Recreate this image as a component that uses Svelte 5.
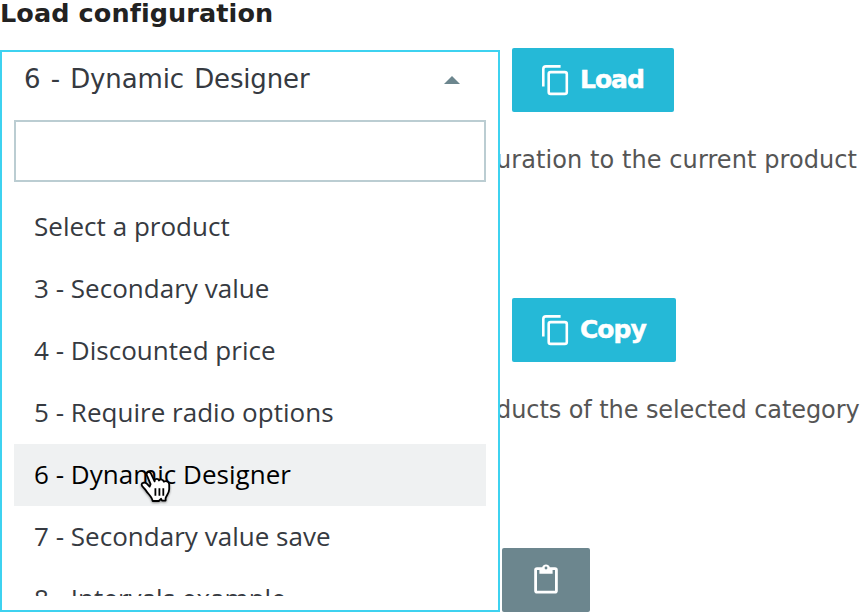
<script>
  const options = [
    'Select a product',
    '3 - Secondary value',
    '4 - Discounted price',
    '5 - Require radio options',
    '6 - Dynamic Designer',
    '7 - Secondary value save',
    '8 - Intervals example'
  ];
  let selected = $state(4);
  let query = $state('');
</script>

{#snippet copyIcon()}
  <svg class="copy-icon" width="28" height="32" viewBox="0 0 28 32" fill="none" stroke="#fff" stroke-width="2.6">
    <path d="M2.3 22.5V5.1Q2.3 2.4 5 2.4H19.6" />
    <rect x="7.7" y="8.1" width="18.1" height="21.8" rx="2" />
  </svg>
{/snippet}

<main class="page">
  <h3>Load configuration</h3>

  <section class="group">
    <button class="primary load">{@render copyIcon()}<span class="label">Load</span></button>
    <p class="help first">uration to the current product</p>
  </section>

  <section class="group">
    <button class="primary copy">{@render copyIcon()}<span class="label">Copy</span></button>
    <p class="help second">ducts of the selected category</p>
  </section>

  <button class="clipboard" aria-label="Clipboard">
    <svg width="24" height="30" viewBox="0 0 24 30">
      <path fill="#fff" fill-rule="evenodd" d="M3 3.2H8.2A4 4 0 0 1 15.8 3.2H21A2.8 2.8 0 0 1 23.8 6V26.8A2.8 2.8 0 0 1 21 29.6H3A2.8 2.8 0 0 1 .2 26.8V6A2.8 2.8 0 0 1 3 3.2ZM3 5.9V26.8H21V5.9H18.6V9.8H5.4V5.9ZM12 2.6A1.4 1.4 0 1 0 12 5.4A1.4 1.4 0 1 0 12 2.6Z" />
    </svg>
  </button>

  <div class="dropdown">
    <div class="current">
      <span class="value">{options[selected]}</span>
      <span class="arrow"></span>
    </div>
    <input type="text" aria-label="Search" bind:value={query} />
    <ul>
      {#each options as option, i}
        <li class:active={i === selected}><span>{option}</span></li>
      {/each}
    </ul>
  </div>

  <svg class="pointer" width="36" height="40" viewBox="0 0 36 40">
    <path
      d="M10.6 20.2L6.9 11.4C5.7 8.1 9.7 6.7 11 9.7L14.6 17.4V16.7C15.2 14.3 18.4 14.5 19 16.5C20.4 14.7 23.3 15.4 23.8 17.7C25.7 16.4 28.9 17.6 29.2 20.4V25.2C29.2 29 26.2 31.5 25.6 34.3V36.6H22L21 34.8L18.8 37H12.6C12.2 32.8 7.8 29.8 6.1 26.7C4.9 24.6 1.7 22.6 1.6 20.7C1.6 18.4 5 18.1 6.8 19.7L9.6 22.6Z"
      fill="#fff" stroke="#000" stroke-width="1.8" stroke-linejoin="round" />
    <path d="M15.4 24.3V31.8M19.4 24.3V31.8M23.3 24.3V31.8" stroke="#000" stroke-width="1.8" />
  </svg>
</main>

<style>
  :global(body) { margin: 0; background: #fff; }
  * { box-sizing: border-box; }
  .page {
    position: relative;
    width: 860px;
    height: 612px;
    overflow: hidden;
    background: #fff;
    font-family: Verdana, 'DejaVu Sans', sans-serif;
  }
  h3 {
    margin: 0;
    height: 48px;
    line-height: 26px;
    font-size: 25.5px;
    letter-spacing: 0.1px;
    color: #222;
    white-space: nowrap;
  }
  .group { height: 250px; }
  button { border: 0; border-radius: 2px; font-family: inherit; }
  .primary {
    display: flex;
    align-items: center;
    gap: 11px;
    height: 64px;
    margin-left: 512px;
    padding: 0 0 0 29px;
    background: #25b9d7;
    color: #fff;
    font-size: 25px;
    font-weight: 700;
    letter-spacing: -1px;
    -webkit-text-stroke: 0.5px #fff;
  }
  .label { padding-bottom: 2px; }
  .load { width: 162px; }
  .copy { width: 164px; }
  .help {
    margin: 32px 0 0 496px;
    line-height: 32px;
    font-size: 24px;
    color: #555;
    white-space: nowrap;
  }
  .first { letter-spacing: 0.08px; }
  .second { letter-spacing: -0.08px; }
  .clipboard {
    display: flex;
    align-items: center;
    justify-content: center;
    width: 88px;
    height: 64px;
    margin-left: 502px;
    padding: 0 0 2px;
    background: #6c868e;
  }
  .dropdown {
    position: absolute;
    left: 0;
    top: 50px;
    width: 500px;
    height: 562px;
    padding: 0 12px;
    border: 2px solid #3ed2f0;
    background: #fff;
    color: #363a41;
  }
  .current {
    display: flex;
    align-items: center;
    justify-content: space-between;
    height: 56px;
    margin-bottom: 12px;
    padding: 0 26px 0 10px;
    font-size: 26px;
    white-space: nowrap;
  }
  .value {
    padding-bottom: 2px;
    letter-spacing: -0.15px;
    word-spacing: 2.2px;
  }
  .arrow {
    border: 8px solid transparent;
    border-top: 0;
    border-bottom-color: #6c868e;
  }
  input {
    display: block;
    width: 472px;
    height: 62px;
    padding: 0 16px;
    border: 2px solid #bbcdd2;
    background: #fff;
    font-size: 26px;
    outline: 0;
  }
  ul {
    height: 400px;
    margin: 14px 0 0;
    padding: 0;
    overflow: hidden;
    list-style: none;
    font-family: 'Open Sans', sans-serif;
    font-size: 26px;
  }
  li {
    height: 62px;
    padding-left: 20px;
    line-height: 60px;
    letter-spacing: 0.02px;
    white-space: nowrap;
  }
  .active { background: #eff1f2; color: #000; }
  .pointer {
    position: absolute;
    left: 139.5px;
    top: 464px;
    filter: drop-shadow(0 1.5px 1px rgba(0, 0, 0, 0.4));
  }
</style>
